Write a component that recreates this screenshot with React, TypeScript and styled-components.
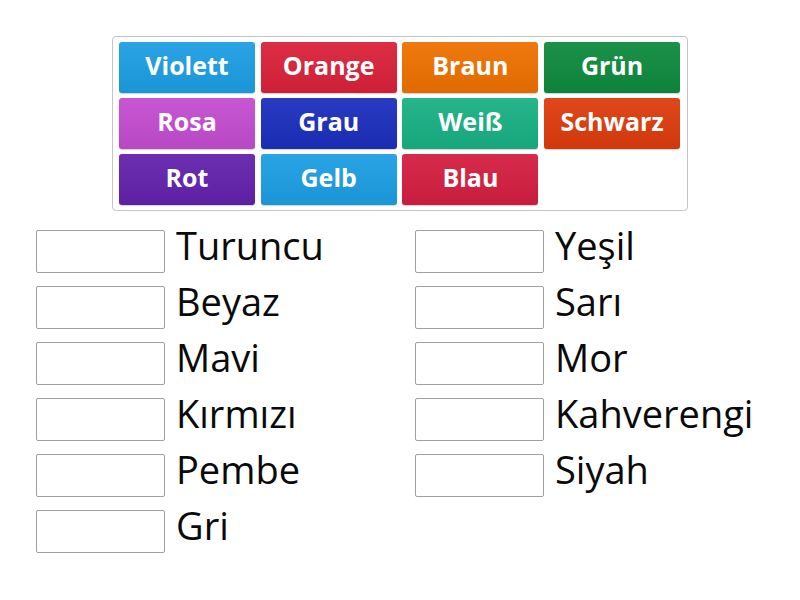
import React from "react";
import styled, { createGlobalStyle } from "styled-components";

const GlobalStyle = createGlobalStyle`
  html, body { margin: 0; padding: 0; background: #ffffff; }
  body { font-family: "Open Sans", "Liberation Sans", sans-serif; }
`;

const Page = styled.div`
  width: 800px;
  height: 600px;
  padding-top: 36px;
  box-sizing: border-box;
`;

const Bank = styled.div`
  width: 576px;
  margin: 0 auto;
  box-sizing: border-box;
  border: 1px solid #c4c4c4;
  border-radius: 4px;
  padding: 5px 6px 5px 6px;
  display: grid;
  grid-template-columns: repeat(4, 136px);
  grid-auto-rows: 51px;
  column-gap: 5.7px;
  row-gap: 5px;
`;

const Tile = styled.div<{ $bg: string }>`
  background: ${(p) => p.$bg};
  background-image: linear-gradient(rgba(255,255,255,0.06), rgba(0,0,0,0.06));
  border-radius: 3px;
  box-shadow: 0 1px 1px rgba(0,0,0,0.18);
  color: #ffffff;
  font-weight: 700;
  font-size: 25px;
  padding-bottom: 5px;
  box-sizing: border-box;
  display: flex;
  align-items: center;
  justify-content: center;
`;

const Targets = styled.div`
  margin-top: 19px;
  padding-left: 36px;
  display: grid;
  grid-template-columns: 379px 379px;
  grid-auto-flow: column;
  grid-template-rows: repeat(6, 56px);
`;

const Row = styled.div`
  display: flex;
  align-items: flex-start;
`;

const Box = styled.div`
  width: 129px;
  height: 43px;
  box-sizing: border-box;
  border: 1px solid #a0a0a0;
  border-radius: 2px;
  background: #fff;
  flex: none;
`;

const Label = styled.div`
  margin-left: 11px;
  font-size: 38px;
  line-height: 30px;
  color: #0a0a0a;
  white-space: nowrap;
`;

const tiles: [string, string][] = [
  ["Violett", "#1c9ee2"],
  ["Orange", "#da2139"],
  ["Braun", "#ef7100"],
  ["Grün", "#0e8a3e"],
  ["Rosa", "#c44cd0"],
  ["Grau", "#1b2fbd"],
  ["Weiß", "#19b083"],
  ["Schwarz", "#dd3c0d"],
  ["Rot", "#6322ad"],
  ["Gelb", "#1c9ee2"],
  ["Blau", "#d51e40"],
];

const leftWords = ["Turuncu", "Beyaz", "Mavi", "Kırmızı", "Pembe", "Gri"];
const rightWords = ["Yeşil", "Sarı", "Mor", "Kahverengi", "Siyah"];

export default function App() {
  return (
    <Page>
      <GlobalStyle />
      <Bank>
        {tiles.map(([t, c]) => (
          <Tile key={t} $bg={c}>
            {t}
          </Tile>
        ))}
      </Bank>
      <Targets>
        {leftWords.map((w) => (
          <Row key={w}>
            <Box />
            <Label>{w}</Label>
          </Row>
        ))}
        {rightWords.map((w) => (
          <Row key={w}>
            <Box />
            <Label>{w}</Label>
          </Row>
        ))}
      </Targets>
    </Page>
  );
}
